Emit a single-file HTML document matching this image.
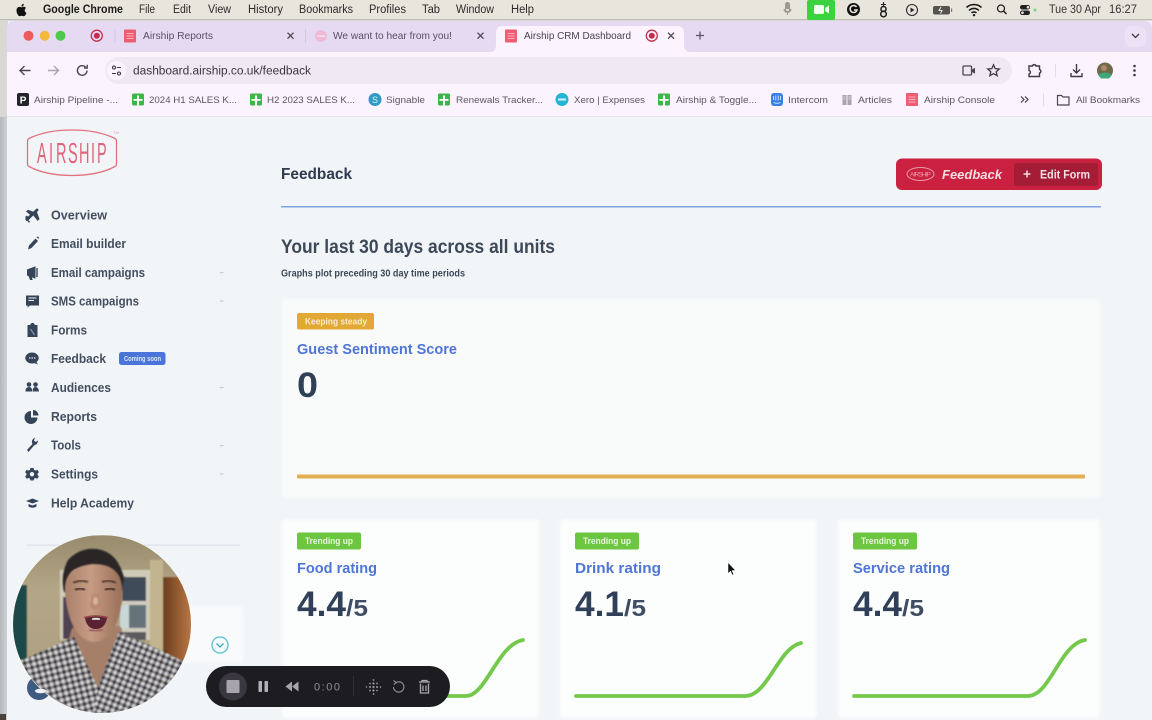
<!DOCTYPE html>
<html><head><meta charset="utf-8"><title>Airship CRM Dashboard</title>
<style>
html,body{margin:0;padding:0;width:1152px;height:720px;overflow:hidden;background:#f1f5f7}
svg{display:block;filter:blur(.35px)}
text{font-family:"Liberation Sans",sans-serif}
.m{font-size:11.5px;fill:#2a2a2a}
.t{font-size:10.5px;fill:#565060}
.b{font-size:9.5px;fill:#5c5763}
.n{font-size:13px;font-weight:bold;fill:#434e60}
.i{fill:#36445a}
.h{font-size:15px;font-weight:bold;fill:#4f75d6}
.v{font-size:35px;font-weight:bold;fill:#2f4058}
.s{font-size:23px;font-weight:bold;fill:#3f4d63}
.g{font-size:9px;font-weight:bold;fill:#e8f7dd}
.l{fill:none;stroke:#74c94c;stroke-width:3.8;stroke-linecap:round}
</style></head><body>
<svg width="1152" height="720" viewBox="0 0 1152 720" xmlns="http://www.w3.org/2000/svg">
<defs>
<linearGradient id="side" x1="0" x2="1"><stop offset="0" stop-color="#b4b8ba"/><stop offset="1" stop-color="#d2d6d8"/></linearGradient>
<linearGradient id="wall" x1="0" x2="0" y1="0" y2="1"><stop offset="0" stop-color="#988b6c"/><stop offset=".3" stop-color="#b3a686"/><stop offset="1" stop-color="#ab9d7e"/></linearGradient>
<linearGradient id="door" x1="0" x2="1"><stop offset="0" stop-color="#6a3c1d"/><stop offset=".55" stop-color="#995f33"/><stop offset="1" stop-color="#bd7b48"/></linearGradient>
<linearGradient id="skin" x1="0" x2="1"><stop offset="0" stop-color="#a97f68"/><stop offset=".45" stop-color="#c69c84"/><stop offset="1" stop-color="#9a6f58"/></linearGradient>
<pattern id="chk" width="6" height="6" patternUnits="userSpaceOnUse" patternTransform="rotate(-14)"><rect width="6" height="6" fill="#dedcd6"/><rect width="3" height="3" fill="#2a2a2e"/><rect x="3" width="3" height="3" fill="#85838a"/><rect y="3" width="3" height="3" fill="#85838a"/></pattern>
<pattern id="chk2" width="6" height="6" patternUnits="userSpaceOnUse" patternTransform="rotate(22)"><rect width="6" height="6" fill="#dedcd6"/><rect width="3" height="3" fill="#2a2a2e"/><rect x="3" width="3" height="3" fill="#85838a"/><rect y="3" width="3" height="3" fill="#85838a"/></pattern>
<clipPath id="cc"><circle cx="102" cy="624" r="89"/></clipPath>
<filter id="bs"><feGaussianBlur stdDeviation=".7"/></filter>
<filter id="bc" x="-3%" y="-3%" width="106%" height="106%"><feGaussianBlur stdDeviation="1.200"/></filter>
<g id="gs"><rect width="12" height="12" rx="1.500" fill="#3cb54a"/><path d="M5 2h2v3.500h3.500v1.700H7V12H5V7.200H1.500V5.500H5z" fill="#fff"/></g>
<g id="rs"><rect width="12" height="13" rx="1" fill="#ef5d73"/><path d="M2.500 4h7M2.500 6.500h7M2.500 9h7" stroke="#f7b0bb" stroke-width="1"/></g>
<g id="rec"><circle r="5.500" fill="none" stroke="#c0304a" stroke-width="1.300"/><circle r="3" fill="#c0304a"/></g>
<path id="x" d="M-3-3 3 3M3-3-3 3" stroke="#4c4753" stroke-width="1.300" fill="none"/>
</defs>

<!-- OS backdrop -->
<rect width="1152" height="720" fill="#f1f5f7"/>
<rect width="1152" height="20" fill="#e8e6dc"/>
<rect y="19" width="1152" height="1.500" fill="#bdbbb4"/>
<rect y="20" width="8" height="97" fill="#d9d8d4"/>
<rect y="117" width="8" height="603" fill="url(#side)"/>
<rect y="714" width="6" height="6" fill="#4a4238"/>

<!-- menu bar -->
<path d="M20.700 9.300c0-1.500 1.200-2.200 1.300-2.300-.7-1-1.800-1.200-2.200-1.200-.9-.1-1.800.6-2.300.6s-1.200-.6-2-.5c-1 0-2 .6-2.500 1.500-1.100 1.900-.3 4.700.8 6.200.5.800 1.100 1.600 1.900 1.600s1.100-.5 2-.5 1.200.5 2 .5 1.400-.8 1.900-1.500c.6-.9.800-1.700.9-1.800-.1 0-1.800-.7-1.800-2.600zM19.200 4.700c.4-.5.700-1.200.6-1.900-.6 0-1.300.4-1.800.9-.4.400-.7 1.100-.6 1.800.7.100 1.400-.3 1.800-.8z" fill="#111" transform="translate(4 1)"/>
<text x="43" y="13" class="m" textLength="80" lengthAdjust="spacingAndGlyphs" style="font-weight:bold;fill:#1b1b1b">Google Chrome</text>
<text x="139" y="13" class="m" textLength="16" lengthAdjust="spacingAndGlyphs">File</text>
<text x="173" y="13" class="m" textLength="18" lengthAdjust="spacingAndGlyphs">Edit</text>
<text x="208" y="13" class="m" textLength="23" lengthAdjust="spacingAndGlyphs">View</text>
<text x="248" y="13" class="m" textLength="35" lengthAdjust="spacingAndGlyphs">History</text>
<text x="299" y="13" class="m" textLength="54" lengthAdjust="spacingAndGlyphs">Bookmarks</text>
<text x="369" y="13" class="m" textLength="37" lengthAdjust="spacingAndGlyphs">Profiles</text>
<text x="422" y="13" class="m" textLength="18" lengthAdjust="spacingAndGlyphs">Tab</text>
<text x="456" y="13" class="m" textLength="38" lengthAdjust="spacingAndGlyphs">Window</text>
<text x="511" y="13" class="m" textLength="23" lengthAdjust="spacingAndGlyphs">Help</text>
<!-- menu right -->
<path d="M785.500 4.500a2 2 0 0 1 4 0v5a2 2 0 0 1-4 0zM784 9a3.500 3.500 0 0 0 7 0M787.500 12.500V15" fill="#9a9992" stroke="#9a9992" stroke-width="1"/>
<rect x="807" y="0" width="28" height="20" rx="2" fill="#3bd23f"/>
<rect x="814" y="5" width="10" height="9" rx="1.500" fill="#f2fff2"/><path d="M825 8l4-2.500v8l-4-2.500z" fill="#f2fff2"/>
<circle cx="853.500" cy="9.500" r="6.500" fill="#111"/><path d="M856.500 7a3.500 3.500 0 1 0 .5 3h-3" stroke="#e8e6dc" stroke-width="1.500" fill="none"/>
<path d="M883.500 2v5M881 4.500h5" stroke="#222" stroke-width="1.100"/><circle cx="883.500" cy="9" r="2.500" fill="none" stroke="#222" stroke-width="1.600"/><circle cx="883.500" cy="14" r="2.800" fill="none" stroke="#222" stroke-width="1.600"/>
<circle cx="912" cy="10" r="5.500" fill="none" stroke="#2a2a2a" stroke-width="1.100"/><path d="M910.500 7.500l4 2.500-4 2.500z" fill="#2a2a2a"/>
<rect x="933" y="6" width="17" height="8.500" rx="2" fill="#55544f"/><path d="M941 7l-2 3.500h3l-1.500 3" stroke="#e8e6dc" stroke-width="1" fill="none"/><rect x="951" y="8.500" width="1.200" height="3.500" fill="#77766f"/>
<path d="M966.500 7.500a11 11 0 0 1 15 0M969 10.500a7 7 0 0 1 10 0M971.500 13a3.500 3.500 0 0 1 5 0" stroke="#1c1c1c" stroke-width="1.600" fill="none"/><circle cx="974" cy="15.200" r="1.200" fill="#1c1c1c"/>
<circle cx="1001" cy="8.500" r="3.500" fill="none" stroke="#222" stroke-width="1.300"/><path d="M1003.500 11l3 3" stroke="#222" stroke-width="1.500"/>
<rect x="1020" y="5" width="10" height="4.500" rx="2.200" fill="#222"/><rect x="1020" y="10.500" width="10" height="4.500" rx="2.200" fill="#222"/><circle cx="1028" cy="7.200" r="1.300" fill="#e8e6dc"/><circle cx="1022.500" cy="12.700" r="1.300" fill="#e8e6dc"/>
<circle cx="1035" cy="10" r="1.500" fill="#6cd88a"/>
<text x="1049" y="13" class="m" textLength="52" lengthAdjust="spacingAndGlyphs" style="fill:#333">Tue 30 Apr</text>
<text x="1109" y="13" class="m" textLength="28" lengthAdjust="spacingAndGlyphs" style="fill:#333">16:27</text>

<!-- tab strip -->
<path d="M7 52V29q0-8 8-8H1144q8 0 8 8V52z" fill="#e6daf3"/>
<rect x="7" y="52" width="1145" height="65" fill="#fbf3fd"/>
<circle cx="28.500" cy="35.700" r="5" fill="#ed5a5c"/><circle cx="44.700" cy="35.700" r="5" fill="#f4b93c"/><circle cx="60.500" cy="35.700" r="5" fill="#4fc94b"/>
<use href="#rec" x="96.800" y="35.700"/>
<rect x="114.500" y="29" width="1" height="14" fill="#d3c8e0"/>
<use href="#rs" x="124" y="29.500"/>
<text x="143" y="39" class="t" textLength="70" lengthAdjust="spacingAndGlyphs">Airship Reports</text>
<use href="#x" x="290.500" y="35.700"/>
<rect x="305" y="29" width="1" height="14" fill="#d3c8e0"/>
<rect x="315" y="30" width="12" height="12" rx="6" fill="#eeb9d6"/><rect x="317" y="35.500" width="8" height="1.200" fill="#fbeaf4"/>
<text x="333" y="39" class="t" textLength="119" lengthAdjust="spacingAndGlyphs">We want to hear from you!</text>
<use href="#x" x="480.500" y="35.700"/>
<path d="M489 52q7 0 7-7V33q0-7 7-7H677q7 0 7 7v12q0 7 7 7z" fill="#fbf3fd"/>
<use href="#rs" x="505" y="29.500"/>
<text x="524" y="39" class="t" textLength="107" lengthAdjust="spacingAndGlyphs" style="fill:#4a4552">Airship CRM Dashboard</text>
<use href="#rec" x="651.800" y="35.700"/>
<use href="#x" x="671" y="35.700"/>
<path d="M700 31.500v8M696 35.500h8" stroke="#5a5563" stroke-width="1.300"/>
<rect x="1125" y="26" width="21" height="21" rx="7" fill="#ebe2f5"/>
<path d="M1132 34l3.500 3.500 3.500-3.500" stroke="#3f3a48" stroke-width="1.300" fill="none"/>

<!-- toolbar -->
<rect x="105" y="57" width="907" height="27" rx="13.500" fill="#f0e9f3"/>
<path d="M30.500 70.500H20M24.500 66l-4.500 4.500 4.500 4.500" stroke="#4b4653" stroke-width="1.400" fill="none"/>
<path d="M48 70.500h10.500M54 66l4.500 4.500L54 75" stroke="#a9a4ae" stroke-width="1.400" fill="none"/>
<path d="M87 70.500a4.800 4.800 0 1 1-1.400-3.400M87.200 64.800v3.200H84" stroke="#4b4653" stroke-width="1.400" fill="none"/>
<circle cx="116.500" cy="70.500" r="9.500" fill="#fbf3fd"/>
<circle cx="114" cy="67.500" r="1.500" fill="none" stroke="#3f3a48" stroke-width="1.100"/><path d="M117 67.500h4M112 73.500h4" stroke="#3f3a48" stroke-width="1.100"/><circle cx="119" cy="73.500" r="1.500" fill="none" stroke="#3f3a48" stroke-width="1.100"/>
<text x="133" y="74.500" font-size="11.500" fill="#3a3640" textLength="178" lengthAdjust="spacingAndGlyphs">dashboard.airship.co.uk/feedback</text>
<rect x="963" y="66" width="8.500" height="9" rx="1" fill="none" stroke="#4b4653" stroke-width="1.300"/><path d="M972 69.500l3-1.800v6.100l-3-1.800z" fill="#4b4653"/>
<path d="M993.500 64.800l1.700 3.800 4.100.4-3.100 2.700.9 4-3.600-2.100-3.600 2.100.9-4-3.100-2.700 4.100-.4z" fill="none" stroke="#3f3a48" stroke-width="1.300"/>
<path d="M1029 66h3.500a1.800 1.800 0 0 1 3.500 0h3.500v3.500a1.800 1.800 0 0 1 0 3.500V76.500H1029v-2.500a1.800 1.800 0 0 0 0-3.500z" fill="none" stroke="#3f3a48" stroke-width="1.400"/>
<rect x="1055" y="64" width="1" height="13" fill="#e3dce7"/>
<path d="M1076.500 64v9M1073 69.500l3.500 3.500 3.500-3.500M1071 73v3.500h11V73" fill="none" stroke="#3f3a48" stroke-width="1.400"/>
<circle cx="1105" cy="70.500" r="8" fill="#6e6a4a"/><circle cx="1104" cy="68" r="3" fill="#b08768"/><path d="M1098 75q7-5 14 0l-3 3.500h-8z" fill="#3fa77a"/>
<circle cx="1134.500" cy="66" r="1.300" fill="#3f3a48"/><circle cx="1134.500" cy="70.500" r="1.300" fill="#3f3a48"/><circle cx="1134.500" cy="75" r="1.300" fill="#3f3a48"/>

<!-- bookmarks -->
<rect x="17" y="93" width="12" height="13" rx="2" fill="#25242a"/><text x="19.700" y="103.500" font-size="10" font-weight="bold" fill="#fff">P</text>
<text x="34" y="103" class="b" textLength="84" lengthAdjust="spacingAndGlyphs">Airship Pipeline -...</text>
<use href="#gs" x="132" y="93.500"/>
<text x="149" y="103" class="b" textLength="88" lengthAdjust="spacingAndGlyphs">2024 H1 SALES K...</text>
<use href="#gs" x="250" y="93.500"/>
<text x="267" y="103" class="b" textLength="88" lengthAdjust="spacingAndGlyphs">H2 2023 SALES K...</text>
<circle cx="375" cy="99.500" r="6.500" fill="#2f9bc4"/><text x="372" y="103" font-size="9" fill="#dff3fa">S</text>
<text x="386" y="103" class="b" textLength="39" lengthAdjust="spacingAndGlyphs">Signable</text>
<use href="#gs" x="438" y="93.500"/>
<text x="456" y="103" class="b" textLength="87" lengthAdjust="spacingAndGlyphs">Renewals Tracker...</text>
<circle cx="562" cy="99.500" r="6.500" fill="#22b5d6"/><rect x="558" y="98.500" width="8" height="2" fill="#d6f3fa"/>
<text x="574" y="103" class="b" textLength="71" lengthAdjust="spacingAndGlyphs">Xero | Expenses</text>
<use href="#gs" x="658" y="93.500"/>
<text x="676" y="103" class="b" textLength="81" lengthAdjust="spacingAndGlyphs">Airship &amp; Toggle...</text>
<rect x="771" y="93" width="12" height="13" rx="3" fill="#3a7fe6"/><path d="M773.500 96v4M775.800 95.500v5M778.200 95.500v5M780.500 96v4M773.500 102.500q3.500 1.500 7 0" stroke="#d9e8ff" stroke-width=".9" fill="none"/>
<text x="788" y="103" class="b" textLength="40" lengthAdjust="spacingAndGlyphs">Intercom</text>
<path d="M842.500 95h4v10h-4zM847.500 95h4v10h-4z" fill="#a9a5ab"/><path d="M843.500 97h2M843.500 99h2M848.500 97h2M848.500 99h2" stroke="#f2ecf3" stroke-width=".7"/>
<text x="858" y="103" class="b" textLength="34" lengthAdjust="spacingAndGlyphs">Articles</text>
<use href="#rs" x="906" y="93"/>
<text x="924" y="103" class="b" textLength="71" lengthAdjust="spacingAndGlyphs">Airship Console</text>
<path d="M1021 96.500l3 3-3 3M1025 96.500l3 3-3 3" stroke="#3f3a48" stroke-width="1.200" fill="none"/>
<rect x="1043" y="93" width="1" height="13" fill="#e3dce7"/>
<path d="M1057.500 95.500h4l1.500 1.500h6v8h-11.500z" fill="none" stroke="#4b4653" stroke-width="1.200"/>
<text x="1076" y="103" class="b" textLength="64" lengthAdjust="spacingAndGlyphs">All Bookmarks</text>

<!-- page -->
<rect x="7" y="116.500" width="1145" height="604" fill="#f1f5f7"/>
<rect x="7" y="116" width="1145" height="1" fill="#e7e2ea"/>

<!-- logo -->
<path d="M29 138.500 Q46 130 72 130 Q98 130 115 138.500 Q116.500 139.500 116.500 141 V164 Q116.500 165.500 115 166.500 Q98 175.500 72 175.500 Q46 175.500 29 166.500 Q27.500 165.500 27.500 164 V141 Q27.500 139.500 29 138.500 Z" fill="none" stroke="#e2707f" stroke-width="1.300"/>
<g transform="translate(0 163) scale(.5 1)" font-size="29" fill="#e2647a"><text x="74" y="0">A</text><text x="98" y="0">I</text><text x="112" y="0">R</text><text x="136" y="0">S</text><text x="158" y="0">H</text><text x="182" y="0">I</text><text x="194" y="0">P</text></g>
<text x="113" y="134" font-size="4" fill="#e2a0aa">TM</text>

<!-- nav icons -->
<path d="M27 219.500 37 210" stroke="#36445a" stroke-width="2.800" stroke-linecap="round" fill="none"/>
<path class="i" d="M26 211.500l2-1.800 7.500 2.800-3.700 3.700zM37.800 221l1.700-2-2.700-7.500-3.700 3.700zM25.500 216.500l1.200-1 3.500 3-1.800 1.800 1.800 1.500-1.200 .9-3.500-3.500z"/>
<path class="i" d="M28 249.500l1-4 6.500-7 2.500 2.500-6.500 7zM36.500 237l1.500-.5 1 1-.5 1.500z"/>
<path class="i" d="M27 269.500l8.500-3.300v12.600L27 275.500zM28.500 276h3l1.200 4h-2.700z"/><path d="M37 268v9" stroke="#36445a" stroke-width="1.400"/>
<path class="i" d="M26 295.500h13v10h-9l-2.500 2v-2H26z"/><path d="M28.500 298h8M28.500 300.500h5.500" stroke="#f1f5f8" stroke-width="1.100"/>
<path class="i" d="M27.500 325h2.500l1.500-2h2l1.500 2h2.500v12h-10z"/><path d="M30.500 329l4 6" stroke="#8592a4" stroke-width="1.200"/>
<ellipse class="i" cx="32" cy="358" rx="6.700" ry="5.500"/><path class="i" d="M36 361.500l2 3-4-1.500z"/><path d="M29 358h1.400M31.500 358h1.400M34 358h1.400" stroke="#eef2f6" stroke-width="1.200"/>
<circle class="i" cx="29" cy="384.500" r="2.300"/><circle class="i" cx="35.500" cy="384.500" r="2.300"/><path class="i" d="M25.500 391.500q0-4.500 3.500-4.500t3 4.500zM32.500 391.500q0-4.500 3-4.500t3.500 4.500z"/>
<path class="i" d="M31 411v6.500h6.500a6.500 6.500 0 1 1-6.500-6.500z"/><path class="i" d="M33 410a5.500 5.500 0 0 1 5.500 5.500H33z"/>
<path class="i" d="M28.500 452l-1.500-2 5.500-6a4 4 0 0 1 .5-5l2-1.500-1 3 1.500 1.500 2.500-1.500q-.5 4-3 4.500l-1 .5z"/>
<path class="i" d="M30.500 468h3l.5 1.800 1.700.8 1.700-.8 1.500 2.500-1.300 1.200v1.600l1.300 1.200-1.500 2.500-1.700-.8-1.700.8-.5 1.700h-3l-.5-1.700-1.700-.8-1.700.8-1.500-2.500 1.300-1.200v-1.600l-1.300-1.200 1.500-2.500 1.700.8 1.700-.8zM32 472a2.200 2.200 0 1 0 .01 0z" fill-rule="evenodd"/>
<path class="i" d="M26 501l6.500-2.500 6.500 2.500-6.500 2.500z"/><path class="i" d="M28.500 504l4 1.500 4-1.500v2.500q-4 2.500-8 0z"/>

<!-- nav text -->
<text x="51" y="219.500" class="n" textLength="56" lengthAdjust="spacingAndGlyphs">Overview</text>
<text x="51" y="248" class="n" textLength="75" lengthAdjust="spacingAndGlyphs">Email builder</text>
<text x="51" y="277" class="n" textLength="94" lengthAdjust="spacingAndGlyphs">Email campaigns</text>
<text x="51" y="305.500" class="n" textLength="88" lengthAdjust="spacingAndGlyphs">SMS campaigns</text>
<text x="51" y="334.500" class="n" textLength="36" lengthAdjust="spacingAndGlyphs">Forms</text>
<text x="51" y="363" class="n" textLength="55" lengthAdjust="spacingAndGlyphs">Feedback</text>
<text x="51" y="392" class="n" textLength="60" lengthAdjust="spacingAndGlyphs">Audiences</text>
<text x="51" y="421" class="n" textLength="46" lengthAdjust="spacingAndGlyphs">Reports</text>
<text x="51" y="449.500" class="n" textLength="30" lengthAdjust="spacingAndGlyphs">Tools</text>
<text x="51" y="478.500" class="n" textLength="47" lengthAdjust="spacingAndGlyphs">Settings</text>
<text x="51" y="507.500" class="n" textLength="83" lengthAdjust="spacingAndGlyphs">Help Academy</text>
<rect x="119" y="352" width="46.500" height="13" rx="2.500" fill="#4b73dc"/>
<text x="124" y="361" font-size="7" font-weight="bold" fill="#dbe6fb" textLength="37" lengthAdjust="spacingAndGlyphs">Coming soon</text>
<g fill="#c6ccd3"><rect x="220" y="272" width="3.500" height="1.200"/><rect x="220" y="300.500" width="3.500" height="1.200"/><rect x="220" y="387" width="3.500" height="1.200"/><rect x="220" y="445" width="3.500" height="1.200"/><rect x="220" y="473.500" width="3.500" height="1.200"/></g>

<rect x="27" y="544.500" width="213" height="1.300" fill="#dbe3ee"/>
<rect x="170" y="606" width="73" height="57" fill="#f8fafb" filter="url(#bc)"/>
<circle cx="220" cy="645" r="8" fill="#f3fafb" stroke="#58c0cf" stroke-width="1.300"/><path d="M216.500 643.500l3.500 3.500 3.500-3.500" stroke="#3ea8c0" stroke-width="1.300" fill="none"/>
<circle cx="39" cy="688" r="12" fill="#3d5a80"/>

<!-- header -->
<text x="281" y="179" font-size="16" font-weight="bold" fill="#2e3a4d" textLength="71" lengthAdjust="spacingAndGlyphs">Feedback</text>
<rect x="896" y="158.500" width="206" height="31.500" rx="6" fill="#c9213f"/>
<rect x="1014" y="163" width="84" height="23" rx="2.500" fill="#a41c36"/>
<ellipse cx="920.500" cy="174" rx="13.500" ry="6.500" fill="none" stroke="#eb9aa8" stroke-width="1"/>
<text x="910" y="176.500" font-size="6.500" fill="#eb9aa8" textLength="21" lengthAdjust="spacing">AIRSHIP</text>
<text x="942" y="179" font-size="13" font-weight="bold" font-style="italic" fill="#f8dde2" textLength="60" lengthAdjust="spacingAndGlyphs">Feedback</text>
<path d="M1027 170.500v7M1023.500 174h7" stroke="#f6dbe0" stroke-width="1.500"/>
<text x="1040" y="178.500" font-size="11.500" font-weight="bold" fill="#f8e1e5" textLength="50" lengthAdjust="spacingAndGlyphs">Edit Form</text>
<rect x="281" y="206" width="820" height="1.500" fill="#7ea4df"/>

<text x="281" y="253" font-size="19" font-weight="bold" fill="#3d4959" textLength="274" lengthAdjust="spacingAndGlyphs">Your last 30 days across all units</text>
<text x="281" y="276.500" font-size="10" font-weight="bold" fill="#3d4959" textLength="184" lengthAdjust="spacingAndGlyphs">Graphs plot preceding 30 day time periods</text>

<!-- sentiment card -->
<rect x="282" y="299" width="818" height="199" rx="4" fill="#f9fbfb" filter="url(#bc)"/>
<rect x="297" y="313" width="77" height="16.500" rx="2" fill="#e2a836"/>
<text x="305" y="324.500" font-size="9" font-weight="bold" fill="#f9eccb" textLength="62" lengthAdjust="spacingAndGlyphs">Keeping steady</text>
<text x="297" y="354" class="h" textLength="160" lengthAdjust="spacingAndGlyphs">Guest Sentiment Score</text>
<text x="297" y="397" class="v" textLength="21" lengthAdjust="spacingAndGlyphs">0</text>
<rect x="297" y="474.500" width="788" height="4" rx="1" fill="#e4ae52"/>

<!-- rating cards -->
<rect x="282" y="519" width="257" height="199" rx="4" fill="#fcfdfd" filter="url(#bc)"/>
<rect x="560" y="519" width="257" height="199" rx="4" fill="#fcfdfd" filter="url(#bc)"/>
<rect x="838" y="519" width="262" height="199" rx="4" fill="#fcfdfd" filter="url(#bc)"/>

<rect x="297" y="532.500" width="64" height="17" rx="2" fill="#6cc63f"/>
<text x="305" y="544" class="g" textLength="48" lengthAdjust="spacingAndGlyphs">Trending up</text>
<text x="297" y="573" class="h" textLength="80" lengthAdjust="spacingAndGlyphs">Food rating</text>
<text x="297" y="616" class="v" textLength="49" lengthAdjust="spacingAndGlyphs">4.4</text>
<text x="346" y="616" class="s" textLength="22" lengthAdjust="spacingAndGlyphs">/5</text>
<path class="l" d="M297 696H466C486 696 498 644 523 640"/>

<rect x="575" y="532.500" width="64" height="17" rx="2" fill="#6cc63f"/>
<text x="583" y="544" class="g" textLength="48" lengthAdjust="spacingAndGlyphs">Trending up</text>
<text x="575" y="573" class="h" textLength="86" lengthAdjust="spacingAndGlyphs">Drink rating</text>
<text x="575" y="616" class="v" textLength="49" lengthAdjust="spacingAndGlyphs">4.1</text>
<text x="624" y="616" class="s" textLength="22" lengthAdjust="spacingAndGlyphs">/5</text>
<path class="l" d="M576 696H745C768 696 778 648 801 643"/>

<rect x="853" y="532.500" width="64" height="17" rx="2" fill="#6cc63f"/>
<text x="861" y="544" class="g" textLength="48" lengthAdjust="spacingAndGlyphs">Trending up</text>
<text x="853" y="573" class="h" textLength="97" lengthAdjust="spacingAndGlyphs">Service rating</text>
<text x="853" y="616" class="v" textLength="49" lengthAdjust="spacingAndGlyphs">4.4</text>
<text x="902" y="616" class="s" textLength="22" lengthAdjust="spacingAndGlyphs">/5</text>
<path class="l" d="M854 696H1028C1050 696 1060 644 1085 640"/>

<!-- cursor -->
<path d="M728 562.500v11l2.500-2.500 1.700 4 1.500-.7-1.700-3.800h3.500z" fill="#111" stroke="#fff" stroke-width=".5"/>

<!-- presenter video -->
<circle cx="102" cy="624" r="89.500" fill="#fbfcfc"/>
<g clip-path="url(#cc)">
<g filter="url(#bs)">
<rect x="12" y="535" width="180" height="180" fill="url(#wall)"/>
<rect x="12" y="585" width="15" height="75" fill="#1f4a46"/>
<rect x="150" y="560" width="13" height="90" fill="#c2b48e"/>
<path d="M60 570h90v70H60z" fill="#d0caB8"/>
<rect x="66" y="576" width="60" height="64" fill="#b0a184"/>
<rect x="122" y="577" width="24" height="24" fill="#3f4c5a"/>
<rect x="122" y="601" width="24" height="4" fill="#cfccbf"/>
<rect x="122" y="605" width="24" height="23" fill="#66737a"/>
<rect x="120" y="605" width="9" height="23" fill="#c9d8d6"/>
<rect x="122" y="628" width="24" height="4" fill="#cfccbf"/>
<rect x="122" y="632" width="24" height="8" fill="#5c5a5c"/>
<rect x="63" y="597" width="12" height="42" fill="#4f4252"/>
<rect x="163" y="577" width="30" height="90" fill="url(#door)"/>
</g>
<path d="M72 628l48-2 5 14-27 52-30-50z" fill="#a67f68" filter="url(#bs)"/>
<path d="M18 662Q45 650 74 637L98 688 119 632Q150 645 184 662L195 720H10Z" fill="url(#chk)" filter="url(#bs)"/>
<path d="M98 688 119 632Q150 645 184 662L195 720H92Z" fill="url(#chk2)" filter="url(#bs)"/>
<path d="M64 592Q60 575 68 560 80 547 97 549 118 552 124 578L122 592Q118 572 105 568 85 565 74 570 66 576 66 592Z" fill="#2c2826" filter="url(#bs)"/>
<path d="M65 590Q64 567 93 564 122 564 122 590 122 615 113 630 104 642 94 642 82 641 74 628 66 612 65 590Z" fill="url(#skin)" filter="url(#bs)"/>
<path d="M73 583q8-4 15-1M102 582q7-3 14 1" stroke="#3f2e28" stroke-width="2" fill="none" opacity=".85" filter="url(#bs)"/>
<path d="M75 590q5-3 10 0M105 590q5-3 10 0" stroke="#33241f" stroke-width="2.200" fill="none" opacity=".85" filter="url(#bs)"/>
<path d="M90 607q5 4 11 0l-2-13h-7z" fill="#b98a70" filter="url(#bs)"/>
<ellipse cx="95.500" cy="601" rx="2.500" ry="4" fill="#d8b49e" filter="url(#bs)"/>
<path d="M85 618q11-3 22 0q-2 11-11 11t-11-11z" fill="#5a2333"/>
<path d="M92 618.200q4-.8 8 0l-.3 1.800q-3.700-.5-7.400 0z" fill="#e6dfda"/>
<path d="M84 617.500q12-3.500 24 0" stroke="#8f4048" stroke-width="1.200" fill="none"/>
<path d="M89 630q7 2 14-.5" stroke="#9a4c58" stroke-width="1.600" fill="none" filter="url(#bs)"/>
</g>
<ellipse cx="40.500" cy="691" rx="5.500" ry="2.300" fill="#eef2f6"/>

<!-- recorder pill -->
<rect x="206" y="666" width="244" height="41" rx="20.500" fill="#1d1d21"/>
<circle cx="233" cy="686.500" r="14" fill="#3a3740"/>
<rect x="226.500" y="680" width="13" height="13" rx="1" fill="#a8a4ae"/>
<rect x="258.500" y="681" width="3.500" height="11" rx=".7" fill="#b3b0b6"/><rect x="264.500" y="681" width="3.500" height="11" rx=".7" fill="#b3b0b6"/>
<path d="M285.500 686.500l6.500-5v10zM292 686.500l6.500-5v10z" fill="#a8a5ab"/>
<text x="314" y="690.500" font-size="11" fill="#8f8d94" textLength="26">0:00</text>
<rect x="353" y="676" width="1" height="20" fill="#2f2f34"/>
<g fill="#9a989e"><circle cx="373.500" cy="680" r=".9"/><circle cx="373.500" cy="683.500" r="1.100"/><circle cx="373.500" cy="687" r="1.100"/><circle cx="373.500" cy="690.500" r="1.100"/><circle cx="373.500" cy="694" r=".9"/><circle cx="370" cy="683.500" r=".9"/><circle cx="370" cy="687" r="1"/><circle cx="370" cy="690.500" r=".9"/><circle cx="377" cy="683.500" r=".9"/><circle cx="377" cy="687" r="1"/><circle cx="377" cy="690.500" r=".9"/><circle cx="366.500" cy="687" r=".8"/><circle cx="380.500" cy="687" r=".8"/></g>
<path d="M396 682.500a5.200 5.200 0 1 1-2.500 4.500M393.500 680.500l2.800 2.200-2.600 1.800" stroke="#8b898f" stroke-width="1.200" fill="none"/>
<path d="M419 682h11M422 682v-1.500h5V682M420.500 683.500v9.500h8v-9.500M423 685.500v5.500M426 685.500v5.500" stroke="#aaa8ae" stroke-width="1.300" fill="none"/>
</svg>
</body></html>
